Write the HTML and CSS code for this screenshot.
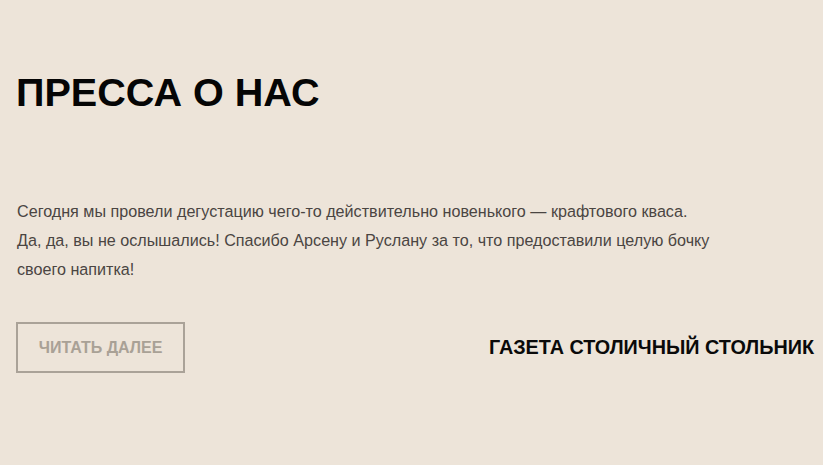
FILE: index.html
```html
<!DOCTYPE html>
<html lang="ru">
<head>
<meta charset="utf-8">
<link rel="stylesheet" href="styles.css">
</head>
<body>
<section class="press">
  <h1 class="press-title">ПРЕССА О НАС</h1>
  <p class="press-text">Сегодня мы провели дегустацию чего-то действительно новенького — крафтового кваса.<br>Да, да, вы не ослышались! Спасибо Арсену и Руслану за то, что предоставили целую бочку<br>своего напитка!</p>
  <div class="press-footer">
    <a class="press-btn">ЧИТАТЬ ДАЛЕЕ</a>
    <div class="press-source">ГАЗЕТА СТОЛИЧНЫЙ СТОЛЬНИК</div>
  </div>
</section>
</body>
</html>
```
FILE: styles.css
```css
html, body {
  margin: 0;
  padding: 0;
  background: #ede4d9;
  font-family: "Liberation Sans", Arial, sans-serif;
}
.press {
  padding: 66px 9px 0 16px;
}
.press-title {
  margin: 0;
  font-size: 39.6px;
  font-weight: 700;
  line-height: 52px;
  color: #050505;
}
.press-text {
  margin: 79px 0 0 1px;
  font-size: 16.15px;
  line-height: 29px;
  color: #4a4542;
}
.press-footer {
  margin-top: 38px;
  display: flex;
  justify-content: space-between;
  align-items: center;
}
.press-btn {
  box-sizing: border-box;
  width: 169px;
  height: 51px;
  border: 2px solid #aaa298;
  display: flex;
  align-items: center;
  justify-content: center;
  font-size: 16px;
  font-weight: 700;
  color: #a9a196;
}
.press-source {
  font-size: 19.8px;
  font-weight: 700;
  color: #0a0a0a;
}
```
